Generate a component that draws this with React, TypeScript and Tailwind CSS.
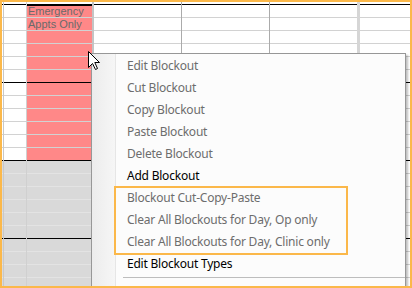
import React from "react";

const ROWS = Array.from({ length: 22 }, (_, i) => i);

type Shade = "white" | "pink" | "gray";

function Column({
  className,
  shade,
  children,
}: {
  className: string;
  shade: (i: number) => Shade;
  children?: React.ReactNode;
}) {
  return (
    <div className={`relative flex shrink-0 flex-col ${className}`}>
      <div className="h-[2px] shrink-0 bg-white" />
      {ROWS.map((i) => {
        const s = shade(i);
        const bg = s === "pink" ? "bg-[#ff8888]" : s === "gray" ? "bg-[#d9d9d9]" : "bg-white";
        const line =
          i % 6 === 0 ? "border-black" : s === "gray" ? "border-[#e3e3e3]" : "border-[#d2d2d2]";
        const thick = i === 0 && s === "pink" ? "border-t-2" : "border-t";
        return <div key={i} className={`h-[13px] shrink-0 ${thick} ${bg} ${line}`} />;
      })}
      {children}
    </div>
  );
}

const items: { label: string; enabled: boolean }[] = [
  { label: "Edit Blockout", enabled: false },
  { label: "Cut Blockout", enabled: false },
  { label: "Copy Blockout", enabled: false },
  { label: "Paste Blockout", enabled: false },
  { label: "Delete Blockout", enabled: false },
  { label: "Add Blockout", enabled: true },
  { label: "Blockout Cut-Copy-Paste", enabled: false },
  { label: "Clear All Blockouts for Day, Op only", enabled: false },
  { label: "Clear All Blockouts for Day, Clinic only", enabled: false },
  { label: "Edit Blockout Types", enabled: true },
];

const white = () => "white" as Shade;
const closed = (i: number): Shade => (i >= 12 ? "gray" : "white");
const blockout = (i: number): Shade => (i >= 12 ? "gray" : "pink");

export default function App() {
  return (
    <div className="relative h-[288px] w-[412px] overflow-hidden border-2 border-[#fbb84a] bg-white">
      {/* Schedule grid */}
      <div className="flex h-full">
        <Column className="w-[2px] border-r border-[#c8c8c8]" shade={closed} />
        <Column className="w-[23px] border-r border-[#d0d0d0]" shade={closed} />
        <Column className="w-[67px] border-r-2 border-[#c4c4c4]" shade={blockout}>
          <div className="absolute left-[1px] top-[3px] font-['Liberation_Sans',Arial,sans-serif] text-[11px] leading-[13px] text-[#6a6a6a]">
            Emergency
            <br />
            Appts Only
          </div>
        </Column>
        <Column className="w-[88px] border-r border-[#ababab]" shade={white} />
        <Column className="w-[88px] border-r border-[#ababab]" shade={white} />
        <Column className="w-[90px] border-r-[3px] border-[#d6d6d6]" shade={white} />
        <Column className="flex-1" shade={white} />
      </div>

      {/* Context menu */}
      <div className="absolute left-[89px] top-[51px] flex h-[262px] w-[315px] border border-[#979797] bg-[#fcfcfc] font-['Noto_Sans',sans-serif] text-[12px] tracking-[-0.22px] shadow-[2px_2px_2px_rgba(0,0,0,0.25)]">
        <div className="w-[24px] shrink-0 border-r border-[#e6e6e6] bg-gradient-to-r from-[#ececec] to-[#f6f6f6]" />
        <div className="flex flex-1 flex-col pt-px">
          {items.map((it) => (
            <div
              key={it.label}
              className={`flex h-[22px] shrink-0 items-center pl-[11px] ${
                it.enabled ? "text-black" : "text-[#6d6d6d]"
              }`}
            >
              {it.label}
            </div>
          ))}
          <div className="ml-[7px] mt-[2px] border-t border-[#bdbdbd]" />
        </div>
      </div>

      {/* Highlight annotation */}
      <div className="absolute left-[112px] top-[184px] h-[69px] w-[234px] border-2 border-[#fbb84a]" />

      {/* Mouse pointer */}
      <svg className="absolute left-[86px] top-[49px]" width="13" height="20" viewBox="0 0 13 20">
        <path
          d="M0.5 0.5 L0.5 16.5 L4.5 12.5 L7.5 18.5 L9.5 17.5 L6.8 11.5 L11.5 11.5 Z"
          fill="#fff"
          stroke="#000"
          strokeWidth="1"
          strokeLinejoin="miter"
        />
      </svg>
    </div>
  );
}
